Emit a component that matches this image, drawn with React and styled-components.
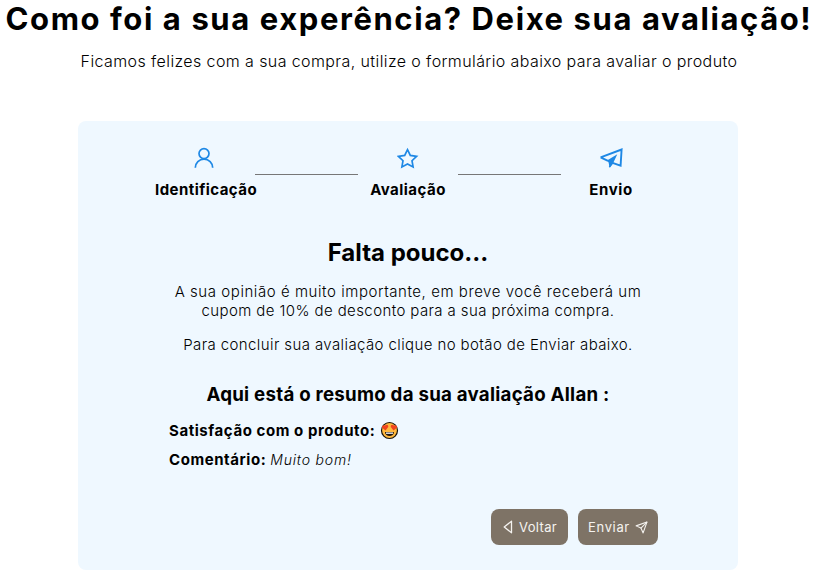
import React from "react";
import styled, { createGlobalStyle } from "styled-components";
import { FiSend } from "react-icons/fi";

const GlobalStyle = createGlobalStyle`
  * { box-sizing: border-box; margin: 0; padding: 0; }
  body { background: #fff; color: #000; font-family: "Inter", sans-serif; font-size: 15px; }
`;
const Page = styled.div`
  display: flex;
  flex-direction: column;
  align-items: center;
  height: 575px;
  white-space: nowrap;
`;
const Title = styled.h1`
  font-size: 31px;
  line-height: 37px;
  letter-spacing: 1.59px;
`;
const Subtitle = styled.p`
  margin-top: 14px;
  font-size: 16px;
  font-weight: 300;
  line-height: 20px;
  letter-spacing: 0.4px;
`;
const Card = styled.main`
  display: flex;
  flex-direction: column;
  width: 660px;
  height: 449px;
  margin: 50px 2px 0 0;
  padding: 26px 80px 0 75px;
  border-radius: 8px;
  background: #eff8ff;
`;
const Steps = styled.div`
  display: grid;
  grid-template-columns: 102px 103px 100px 103px 100px;
`;
const Step = styled.div`
  display: flex;
  flex-direction: column;
  align-items: center;
  gap: 12px;
  svg { display: block; color: #1e88e5; }
`;
const StepLabel = styled.span`
  font-weight: 700;
  line-height: 18px;
  letter-spacing: ${(p) => p.$spacing}px;
  margin-left: ${(p) => p.$shift || 0}px;
`;
const Connector = styled.div`
  height: 1px;
  margin-top: 27px;
  background: #777;
`;
const Message = styled.section`
  display: flex;
  flex-direction: column;
  align-items: center;
  margin: 39px 0 0 5px;
`;
const Heading = styled.h2`
  font-size: 24px;
  line-height: 30px;
  margin-bottom: 14px;
`;
const Paragraph = styled.p`
  font-weight: 300;
  line-height: 19px;
  margin-bottom: 15px;
  text-align: center;
`;
const Line = styled.span`
  display: block;
  letter-spacing: ${(p) => p.$spacing}px;
`;
const SummaryTitle = styled.h3`
  margin-top: 14px;
  font-size: 18.7px;
  line-height: 24px;
  letter-spacing: 0.25px;
`;
const Summary = styled.dl`
  display: flex;
  flex-direction: column;
  gap: 9px;
  margin: 13px 0 0 16px;
`;
const Entry = styled.div`
  display: flex;
  align-items: center;
  gap: 4px;
  height: 20px;
`;
const Term = styled.dt`
  font-weight: 700;
  letter-spacing: 0.57px;
`;
const Comment = styled.dd`
  font-size: 14px;
  font-style: italic;
  font-weight: 300;
  letter-spacing: 0.8px;
`;
const Face = styled.dd`
  display: flex;
  margin-left: 1px;
  svg { display: block; }
`;
const Actions = styled.div`
  display: flex;
  justify-content: flex-end;
  gap: 10px;
  margin-top: 40px;
`;
const Button = styled.button`
  display: flex;
  align-items: center;
  justify-content: center;
  gap: 5px;
  width: ${(p) => p.$width}px;
  height: 36px;
  border: 0;
  border-radius: 8px;
  background: #7e7366;
  color: #f5f3f0;
  font: 400 13px "Inter", sans-serif;
  letter-spacing: ${(p) => p.$spacing}px;
  svg { flex: none; }
`;

const UserIcon = () => (
  <svg width="22" height="22" viewBox="0 0 22 22" fill="none" stroke="currentColor" strokeWidth="1.7">
    <circle cx="11" cy="6.6" r="5" />
    <path d="M2.3 20.8a8.7 8.7 0 0 1 17.4 0" />
  </svg>
);
const StarIcon = () => (
  <svg width="22" height="22" viewBox="0 0 22 22" fill="none" stroke="currentColor" strokeWidth="1.7">
    <path d="m10.5 2.7 2.8 5.7 6.3.9-4.6 4.4 1.1 6.2-5.6-2.9-5.6 2.9L6 13.7 1.4 9.3l6.3-.9Z" />
  </svg>
);
const PlaneIcon = () => (
  <svg width="26" height="22" viewBox="0 0 26 22" fill="none" stroke="currentColor" strokeWidth="1.9">
    <path d="M2.6 10.3 23.6 2.5 22.6 18.6 14.5 15.8M2.6 10.3 10 13.8" />
    <path d="M9 13.6 19.3 7.2 15.3 15.8 11.6 20.8 10.6 15.6Z" fill="currentColor" stroke="none" />
    <path d="m11.4 20 3.3-4.3" strokeWidth="1.6" />
  </svg>
);
const BackIcon = () => (
  <svg width="12" height="16" viewBox="0 0 12 16" fill="none" stroke="currentColor" strokeWidth="1.3" strokeLinejoin="round">
    <path d="M9.5 2.2v11.6L2.2 8Z" />
  </svg>
);
const HeartEyesIcon = () => (
  <svg width="19" height="19" viewBox="0 0 19 19">
    <circle cx="9.5" cy="9.5" r="8" fill="#ffb83d" stroke="#17130d" strokeWidth="1.2" />
    <path d="M5.5 9.4 2.1 6.7c-.8-2.2 1.6-3.4 2.9-1.9C6 3 8.8 3.7 8.2 6.1ZM13.5 9.4l3.4-2.7c.8-2.2-1.6-3.4-2.9-1.9-1-1.8-3.8-1.1-3.2 1.3Z" fill="#f0441e" />
    <path d="M5 11h9c0 5.4-9 5.4-9 0Z" fill="#20160e" />
    <path d="M6 11.5h7v1.3H6Z" fill="#fff" />
  </svg>
);

export default function App() {
  return (
    <>
      <GlobalStyle />
      <Page>
        <Title>Como foi a sua experência? Deixe sua avaliação!</Title>
        <Subtitle>Ficamos felizes com a sua compra, utilize o formulário abaixo para avaliar o produto</Subtitle>
        <Card>
          <Steps>
            <Step><UserIcon /><StepLabel $spacing={0.45} $shift={4}>Identificação</StepLabel></Step>
            <Connector />
            <Step><StarIcon /><StepLabel $spacing={0.47}>Avaliação</StepLabel></Step>
            <Connector />
            <Step><PlaneIcon /><StepLabel $spacing={0.6}>Envio</StepLabel></Step>
          </Steps>
          <Message>
            <Heading>Falta pouco...</Heading>
            <Paragraph>
              <Line $spacing={0.56}>A sua opinião é muito importante, em breve você receberá um</Line>
              <Line $spacing={0.4}>cupom de 10% de desconto para a sua próxima compra.</Line>
            </Paragraph>
            <Paragraph><Line $spacing={0.4}>Para concluir sua avaliação clique no botão de Enviar abaixo.</Line></Paragraph>
            <SummaryTitle>Aqui está o resumo da sua avaliação Allan :</SummaryTitle>
          </Message>
          <Summary>
            <Entry><Term>Satisfação com o produto:</Term><Face role="img" aria-label="😍"><HeartEyesIcon /></Face></Entry>
            <Entry><Term>Comentário:</Term><Comment>Muito bom!</Comment></Entry>
          </Summary>
          <Actions>
            <Button $width={77} $spacing={0.35}><BackIcon />Voltar</Button>
            <Button $width={80} $spacing={0.65}>Enviar<FiSend size={13} /></Button>
          </Actions>
        </Card>
      </Page>
    </>
  );
}
